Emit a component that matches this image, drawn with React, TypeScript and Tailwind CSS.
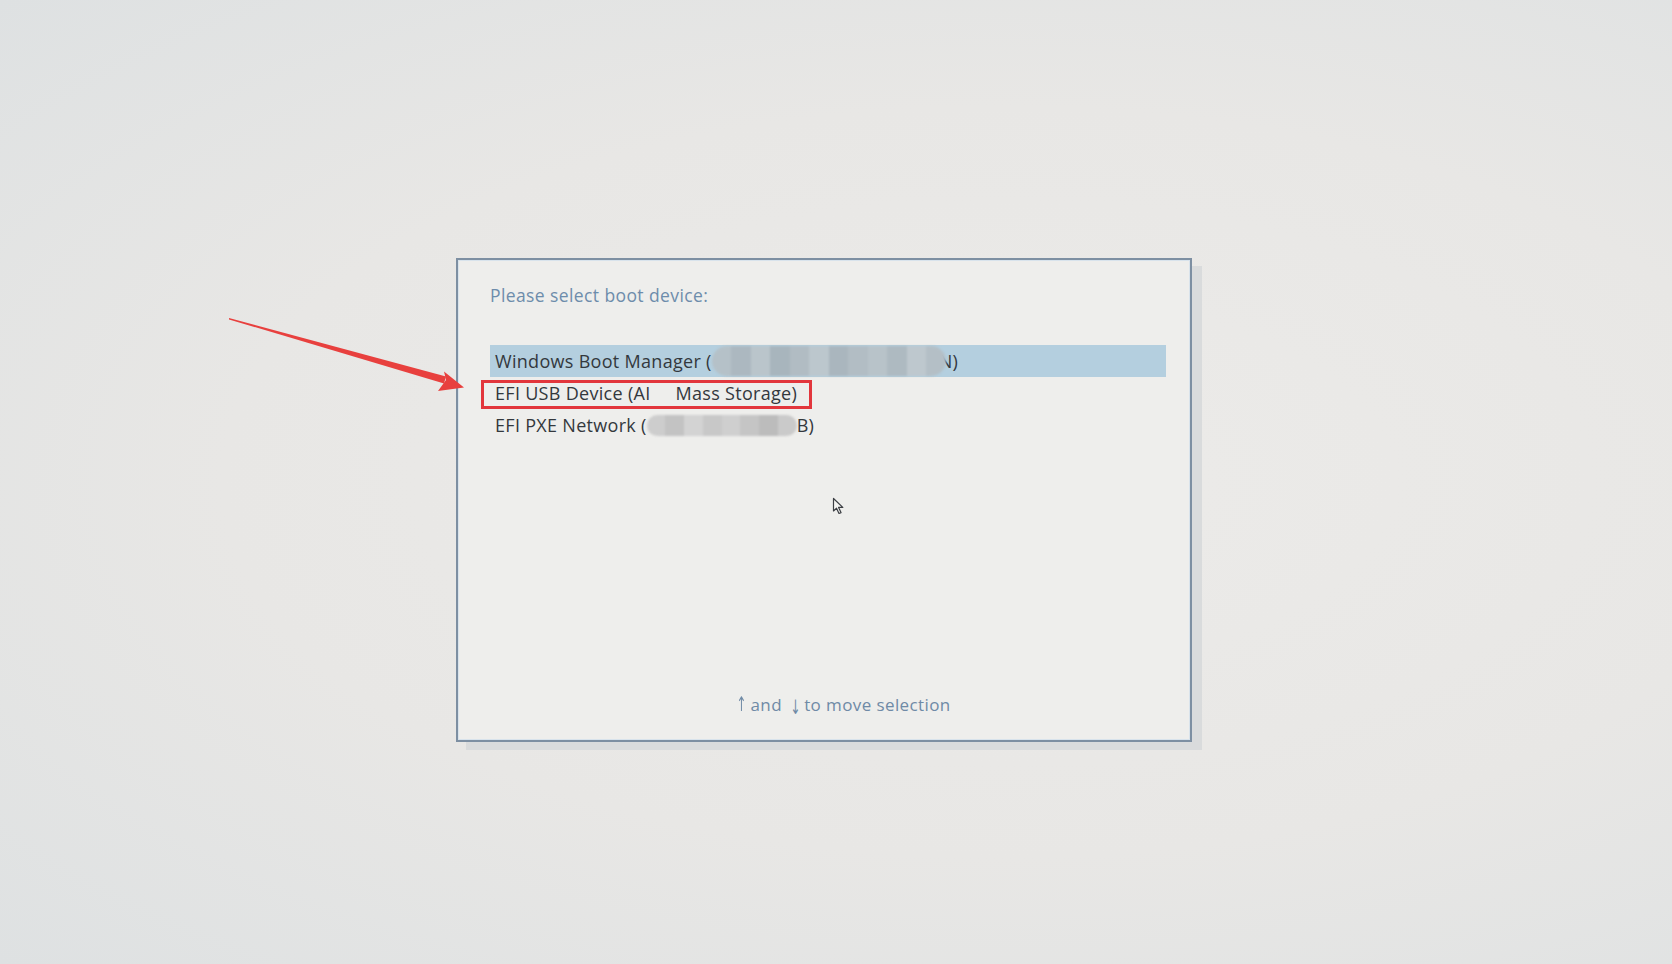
import React from 'react';

// pixelated privacy blur over part of a device name
const Mosaic = ({ width, height, shades }: { width: number; height: number; shades: string[] }) => {
  return (
    <span
      className="inline-flex overflow-hidden rounded-full blur-[1.2px] align-middle"
      style={{ width, height }}
    >
      {shades.map((c, i) => (
        <span key={i} className="h-full flex-1" style={{ backgroundColor: c }} />
      ))}
    </span>
  );
};

const Cursor = () => (
  <svg width="14" height="18" viewBox="0 0 14 18" className="absolute left-[832px] top-[497px]">
    <path d="M1.5 1.5 L1.5 14 L4.5 11.2 L7 16.5 L9 15.6 L6.6 10.4 L10.8 10.4 Z" fill="#f4f4f2" stroke="#3c3f44" strokeWidth="1.2" strokeLinejoin="round" />
  </svg>
);

const RedArrow = () => (
  <svg width="1672" height="964" className="pointer-events-none absolute left-0 top-0">
    <polygon points="229,318 446,376.5 444,383.5 229,319.4" fill="#e8403e" />
    <polygon points="464,387.5 444,371.5 446,380 438,391" fill="#e8403e" />
  </svg>
);

export default function App() {
  const font = { fontFamily: '"Open Sans", "Noto Sans", sans-serif' };
  return (
    <div
      className="relative h-[964px] w-[1672px] overflow-hidden bg-[radial-gradient(ellipse_at_60%_50%,#ecebe9_0%,#e8e7e5_55%,#dee1e2_100%)] pl-[456px] pt-[258px]"
      style={font}
    >
      <div className="relative h-[484px] w-[736px] border-2 border-[#7d8fa2] bg-[#eeeeec] shadow-[10px_8px_0_0_#d9dbdc]">
        <div className="flex h-full flex-col border border-[#d8e3ec] pl-[31px] pr-[23px]">
          <div className="mt-[21px] text-[17.5px] tracking-[0.4px] text-[#6d8cab]">Please select boot device:</div>

          <div className="mt-[37px] flex flex-col text-[18px] tracking-[0.3px] text-[#33383d]">
            <div className="flex h-[32px] items-center bg-[#b4cfdf] pl-[5px]">
              <span>Windows Boot Manager (</span>
              <Mosaic
                width={234}
                height={30}
                shades={['#b5c1c8', '#acb8c0', '#bac5cb', '#a8b5bd', '#b1bcc3', '#bcc7cd', '#aab6be', '#b2bdc4', '#b8c3c9', '#aebac1', '#bec8ce', '#b4bfc6']}
              />
              <span className="-ml-[7px]">N)</span>
            </div>
            <div className="flex h-[32px] items-center pl-[5px]">
              <span>EFI USB Device (AI</span>
              <span className="w-[25px]" />
              <span>Mass Storage)</span>
            </div>
            <div className="flex h-[32px] items-center pl-[5px]">
              <span>EFI PXE Network (</span>
              <Mosaic
                width={150}
                height={21}
                shades={['#cdcdcd', '#c3c3c3', '#d3d3d3', '#c8c8c8', '#cfcfcf', '#c5c5c5', '#bcbcbc', '#cacaca']}
              />
              <span>B)</span>
            </div>
          </div>

          <div className="mt-auto mb-[22px] flex items-center justify-center gap-[5px] pl-[28px] text-[17px] tracking-[0.4px] text-[#6f8aa6]">
            <span className="inline-block scale-x-[0.6] text-[20px] leading-none" style={{ fontFamily: '"DejaVu Sans", sans-serif' }}>↑</span>
            <span className="-ml-[5px]">and</span>
            <span className="inline-block translate-y-[3px] scale-x-[0.6] text-[20px] leading-none" style={{ fontFamily: '"DejaVu Sans", sans-serif' }}>↓</span>
            <span className="-ml-[5px]">to move selection</span>
          </div>
        </div>
      </div>

      {/* annotation overlays */}
      <div className="absolute left-[481px] top-[380px] h-[29px] w-[331px] border-[3px] border-[#e2363c]" />
      <RedArrow />
      <Cursor />
    </div>
  );
}
